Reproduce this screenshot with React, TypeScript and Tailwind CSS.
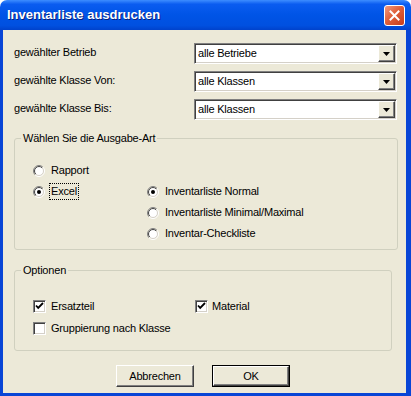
import React from "react";

const sunken =
  "border border-t-[#808080] border-l-[#808080] border-b-white border-r-white shadow-[inset_1px_1px_0_#404040,inset_-1px_-1px_0_#d4d0c8]";
const raised =
  "border border-t-white border-l-white border-b-[#404040] border-r-[#404040] shadow-[inset_-1px_-1px_0_#808080,inset_1px_1px_0_#ece9d8] bg-[#ECE9D8]";

function Combo({ value }: { value: string }) {
  return (
    <div className={`flex items-center w-[203px] h-[21px] bg-white ${sunken}`}>
      <span className="flex-1 pl-[3px] leading-none">{value}</span>
      <div className={`flex items-center justify-center w-[17px] h-[17px] mr-[1px] ${raised}`}>
        <svg width="7" height="4" viewBox="0 0 7 4">
          <path d="M0 0h7L3.5 4z" fill="#000" />
        </svg>
      </div>
    </div>
  );
}

function Radio({ checked }: { checked?: boolean }) {
  return (
    <svg width="12" height="12" viewBox="0 0 12 12" className="shrink-0">
      <defs>
        <linearGradient id="ro" x1="0" y1="0" x2="1" y2="1">
          <stop offset="0.5" stopColor="#808080" />
          <stop offset="0.5" stopColor="#ffffff" />
        </linearGradient>
        <linearGradient id="ri" x1="0" y1="0" x2="1" y2="1">
          <stop offset="0.5" stopColor="#404040" />
          <stop offset="0.5" stopColor="#d4d0c8" />
        </linearGradient>
      </defs>
      <circle cx="6" cy="6" r="5.5" fill="none" stroke="url(#ro)" />
      <circle cx="6" cy="6" r="4.5" fill="#fff" stroke="url(#ri)" />
      {checked && <circle cx="6" cy="6" r="2" fill="#000" />}
    </svg>
  );
}

function Check({ checked }: { checked?: boolean }) {
  return (
    <div className={`w-[13px] h-[13px] bg-white shrink-0 flex items-center justify-center ${sunken}`}>
      {checked && (
        <svg width="9" height="9" viewBox="0 0 9 9">
          <path d="M1 3.5l2.2 2.4L8 1" fill="none" stroke="#000" strokeWidth="1.8" />
        </svg>
      )}
    </div>
  );
}

function OptRadio({ label, checked, focus }: { label: string; checked?: boolean; focus?: boolean }) {
  return (
    <div className="flex items-center gap-[6px]">
      <Radio checked={checked} />
      <span className={focus ? "border border-dotted border-black px-[1px] -ml-[2px] leading-[15px]" : ""}>{label}</span>
    </div>
  );
}

export default function App() {
  return (
    <div className="w-[411px] h-[396px] flex flex-col bg-white text-[11px] tracking-[-0.2px] text-black font-['Liberation_Sans',Arial,sans-serif]">
      <div className="h-[30px] shrink-0 flex items-center justify-between pl-[7px] pr-[6px] rounded-t-[7px] bg-[linear-gradient(180deg,#3d8dff_0%,#0a5cf0_14%,#0054e6_50%,#0050e0_85%,#0042cc_100%)]">
        <span className="text-white font-bold text-[13px] tracking-[0px] [text-shadow:1px_1px_0_#0a1f7a]">
          Inventarliste ausdrucken
        </span>
        <div className="w-[21px] h-[21px] rounded-[3px] border border-white bg-[linear-gradient(135deg,#f09a80_0%,#e0603a_45%,#c43c1c_100%)] flex items-center justify-center">
          <svg width="11" height="11" viewBox="0 0 11 11">
            <path d="M1.5 1.5l8 8M9.5 1.5l-8 8" stroke="#fff" strokeWidth="2" strokeLinecap="square" />
          </svg>
        </div>
      </div>

      <div className="flex-1 flex flex-col bg-[#ECE9D8] border-l-[3px] border-r-[5px] border-b-[3px] border-[#0845d6] pl-[11px] pt-[13px]">
        <div className="flex flex-col gap-[7px]">
          {[
            ["gewählter Betrieb", "alle Betriebe"],
            ["gewählte Klasse Von:", "alle Klassen"],
            ["gewählte Klasse Bis:", "alle Klassen"],
          ].map(([label, value]) => (
            <div key={label} className="flex items-center h-[21px]">
              <span className="w-[180px] -mt-[2px]">{label}</span>
              <Combo value={value} />
            </div>
          ))}
        </div>

        <fieldset className="mt-[12px] w-[384px] border border-[#d0d0bf] rounded-[3px] pl-[18px] pt-[15px] pb-[5px]">
          <legend className="-ml-[12px] px-[2px] leading-[13px]">Wählen Sie die Ausgabe-Art</legend>
          <div className="h-[21px] flex items-center">
            <OptRadio label="Rapport" />
          </div>
          <div className="h-[21px] flex items-center">
            <div className="w-[114px]">
              <OptRadio label="Excel" checked focus />
            </div>
            <OptRadio label="Inventarliste Normal" checked />
          </div>
          <div className="h-[21px] flex items-center pl-[114px]">
            <OptRadio label="Inventarliste Minimal/Maximal" />
          </div>
          <div className="h-[21px] flex items-center pl-[114px]">
            <OptRadio label="Inventar-Checkliste" />
          </div>
        </fieldset>

        <fieldset className="mt-[14px] w-[378px] border border-[#d0d0bf] rounded-[3px] pl-[18px] pt-[18px] pb-[11px]">
          <legend className="-ml-[12px] px-[2px] leading-[13px]">Optionen</legend>
          <div className="h-[22px] flex items-center">
            <div className="w-[162px] flex items-center gap-[5px]">
              <Check checked />
              <span>Ersatzteil</span>
            </div>
            <div className="flex items-center gap-[4px]">
              <Check checked />
              <span>Material</span>
            </div>
          </div>
          <div className="h-[22px] flex items-center gap-[5px]">
            <Check />
            <span>Gruppierung nach Klasse</span>
          </div>
        </fieldset>

        <div className="mt-[14px] ml-[102px] flex gap-[18px]">
          <button className={`w-[78px] h-[22px] flex items-center justify-center ${raised}`}>Abbrechen</button>
          <div className="border border-black">
            <button className={`w-[76px] h-[20px] flex items-center justify-center ${raised}`}>OK</button>
          </div>
        </div>
      </div>
    </div>
  );
}
